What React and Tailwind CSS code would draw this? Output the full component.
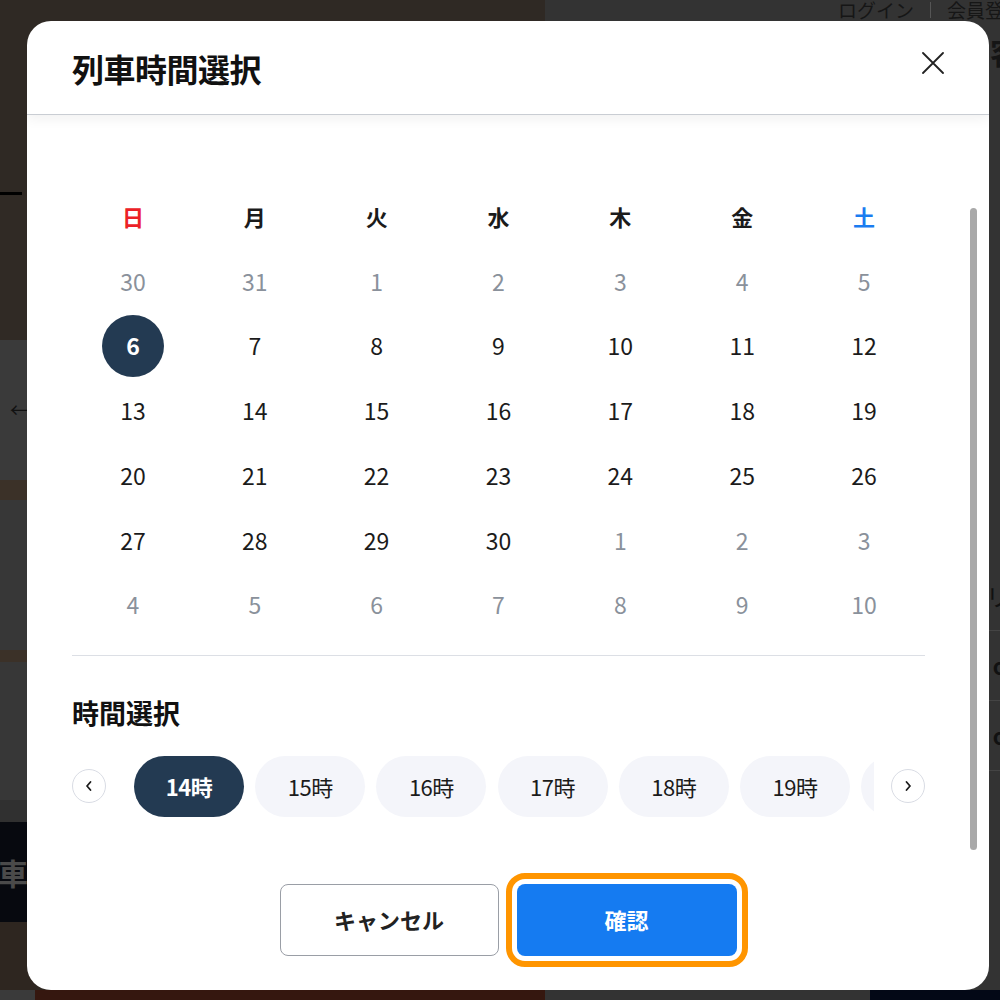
const font = { fontFamily: '"Noto Sans CJK JP", "Noto Sans", sans-serif' };

const weekdays = [
  { label: "日", color: "text-[#ec2127]" },
  { label: "月", color: "text-[#1b1b1b]" },
  { label: "火", color: "text-[#1b1b1b]" },
  { label: "水", color: "text-[#1b1b1b]" },
  { label: "木", color: "text-[#1b1b1b]" },
  { label: "金", color: "text-[#1b1b1b]" },
  { label: "土", color: "text-[#1a7cf0]" },
];

// [day, active]
const weeks = [
  [[30, 0], [31, 0], [1, 0], [2, 0], [3, 0], [4, 0], [5, 0]],
  [[6, 1], [7, 1], [8, 1], [9, 1], [10, 1], [11, 1], [12, 1]],
  [[13, 1], [14, 1], [15, 1], [16, 1], [17, 1], [18, 1], [19, 1]],
  [[20, 1], [21, 1], [22, 1], [23, 1], [24, 1], [25, 1], [26, 1]],
  [[27, 1], [28, 1], [29, 1], [30, 1], [1, 0], [2, 0], [3, 0]],
  [[4, 0], [5, 0], [6, 0], [7, 0], [8, 0], [9, 0], [10, 0]],
];

const hours = [14, 15, 16, 17, 18, 19, 20];

function Chevron({ dir }) {
  return (
    <svg width="10" height="12" viewBox="0 0 10 12" fill="none">
      <path
        d={dir === "left" ? "M6.5 2 L3 6 L6.5 10" : "M3.5 2 L7 6 L3.5 10"}
        stroke="#1b1b1b"
        strokeWidth="1.8"
        strokeLinecap="round"
        strokeLinejoin="round"
      />
    </svg>
  );
}

function Backdrop() {
  return (
    <div className="absolute inset-0 flex">
      <div className="w-[545px] flex flex-col">
        <div className="h-[190px] bg-[#2f2924]" />
        <div className="h-[6px] bg-[#2f2924] flex items-center">
          <div className="w-[22px] h-[3px] bg-black" />
        </div>
        <div className="h-[144px] bg-[#302a25]" />
        <div className="h-[140px] bg-[#3a3a3a] flex items-center pl-[10px] text-[#111] text-[20px]">←</div>
        <div className="h-[20px] bg-[#3b3128]" />
        <div className="h-[150px] bg-[#373737]" />
        <div className="h-[12px] bg-[#3b3128]" />
        <div className="h-[138px] bg-[#373737]" />
        <div className="h-[22px] bg-[#303030]" />
        <div className="h-[100px] bg-[#07090f] flex items-center text-[30px] font-bold text-[#4a4a4a] -ml-[2px]">車</div>
        <div className="h-[68px] bg-[#2e2620]" />
        <div className="h-[10px] flex">
          <div className="w-[35px] bg-[#3a3a3a]" />
          <div className="flex-1 bg-[#35170f]" />
        </div>
      </div>
      <div className="flex-1 flex flex-col bg-[#333333] overflow-hidden">
        <div className="flex items-start h-[21px] gap-[16px] pl-[293px] text-[19px] text-[#161616] leading-[20px] whitespace-nowrap">
          <span>ログイン</span>
          <span className="w-px h-[16px] mt-[2px] bg-[#555] shrink-0" />
          <span>会員登録</span>
        </div>
        <div className="h-[60px] flex justify-end items-center text-[30px] font-bold text-[#151515] -mr-[20px]">客</div>
        <div className="h-[480px]" />
        <div className="h-[70px] flex justify-end items-center text-[24px] text-[#111] border-b border-[#444] -mr-[10px]">リ</div>
        <div className="h-[70px] flex justify-end items-center text-[22px] font-bold text-[#111] border-b border-[#444] -mr-[16px]">or</div>
        <div className="h-[70px] flex justify-end items-center text-[22px] font-bold text-[#111] border-b border-[#444] -mr-[16px]">or</div>
        <div className="flex-1 flex flex-col justify-end">
          <div className="h-[10px] flex">
            <div className="w-[325px] bg-[#333]" />
            <div className="flex-1 bg-[#030816]" />
          </div>
        </div>
      </div>
    </div>
  );
}

export default function App() {
  return (
    <div className="relative w-[1000px] h-[1000px] overflow-hidden bg-[#333]" style={font}>
      <Backdrop />
      <div className="absolute left-[27px] top-[21px] w-[962px] h-[969px] rounded-[24px] bg-white overflow-hidden flex flex-col">
        <div className="relative z-10 h-[94px] shrink-0 flex items-center justify-between pl-[45px] pr-[45px] border-b border-[#c9cdd3] shadow-[0_4px_12px_rgba(0,0,0,0.06)]">
          <h2 className="text-[32px] font-bold text-[#111] leading-none tracking-[-0.5px]">列車時間選択</h2>
          <button className="-mt-[10px]">
            <svg width="22" height="22" viewBox="0 0 22 22">
              <path d="M1 1 L21 21 M21 1 L1 21" stroke="#222" strokeWidth="1.8" strokeLinecap="round" />
            </svg>
          </button>
        </div>

        <div className="relative flex-1 flex flex-col pl-[45px] pr-[64px] pt-[69px]">
          <div className="grid grid-cols-7">
            {weekdays.map((w) => (
              <div key={w.label} className={`h-[64.7px] flex items-center justify-center text-[22px] font-bold ${w.color}`}>
                {w.label}
              </div>
            ))}
            {weeks.flat().map(([d, active], i) => (
              <div key={i} className="h-[64.7px] flex items-center justify-center">
                {d === 6 && active ? (
                  <span className="w-[62px] h-[62px] rounded-full bg-[#233a52] text-white font-bold text-[23px] flex items-center justify-center">
                    {d}
                  </span>
                ) : (
                  <span className={`text-[23px] ${active ? "text-[#1b1b1b]" : "text-[#8a919b]"}`}>{d}</span>
                )}
              </div>
            ))}
          </div>

          <div className="mt-[18px] h-px bg-[#dcdfe5]" />

          <h3 className="mt-[39px] text-[27px] leading-[36px] font-bold text-[#111]">時間選択</h3>

          <div className="mt-[25px] flex items-center">
            <button className="w-[34px] h-[34px] shrink-0 rounded-full border border-[#d9dce4] bg-white flex items-center justify-center">
              <Chevron dir="left" />
            </button>
            <div className="ml-[28px] w-[740px] overflow-hidden flex gap-[11.2px]">
              {hours.map((h) => (
                <div
                  key={h}
                  className={`w-[110px] h-[61px] shrink-0 rounded-full flex items-center justify-center text-[22px] tracking-[-0.5px] ${
                    h === 14 ? "bg-[#233a52] text-white font-bold" : "bg-[#f4f5fa] text-[#1b1b1b]"
                  }`}
                >
                  {h}時
                </div>
              ))}
            </div>
            <button className="ml-[17px] w-[34px] h-[34px] shrink-0 rounded-full border border-[#d9dce4] bg-white flex items-center justify-center">
              <Chevron dir="right" />
            </button>
          </div>

          <div className="mt-[67px] flex justify-center gap-[18px] ml-[-45px] mr-[-64px]">
            <button className="w-[219px] h-[72px] rounded-[8px] border border-[#9a9ea6] bg-white text-[22px] font-bold text-[#222]">
              キャンセル
            </button>
            <button className="w-[220px] h-[72px] rounded-[8px] bg-[#157bf1] text-[22px] font-bold text-white outline-[6px] outline-solid outline-[#ff9500] outline-offset-[5px]">
              確認
            </button>
          </div>

          <div className="absolute right-[12px] top-[93px] w-[7px] h-[642px] rounded-full bg-[#a9a9a9]" />
        </div>
      </div>
    </div>
  );
}
